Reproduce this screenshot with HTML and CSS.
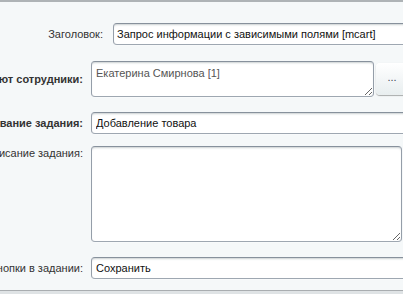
FILE: index.html
```html
<!DOCTYPE html>
<html>
<head>
  <meta charset="utf-8">
  <title>Задание</title>
  <link rel="stylesheet" href="styles.css">
</head>
<body>
  <div class="top-line"></div>
  <div class="form">
    <div class="row row-title">
      <label class="label label-wide">Заголовок:</label>
      <input class="field field-title" type="text" value="Запрос информации с зависимыми полями [mcart]">
    </div>
    <div class="row row-users">
      <label class="label required">Выполняют сотрудники:</label>
      <textarea class="area area-users">Екатерина Смирнова [1]</textarea>
      <button class="dots-btn">...</button>
    </div>
    <div class="row row-name">
      <label class="label required">Название задания:</label>
      <input class="field" type="text" value="Добавление товара">
    </div>
    <div class="row row-top">
      <label class="label">Описание задания:</label>
      <textarea class="area area-desc"></textarea>
    </div>
    <div class="row row-last">
      <label class="label">Текст кнопки в задании:</label>
      <input class="field" type="text" value="Сохранить">
    </div>
  </div>
  <div class="bottom-line"></div>
</body>
</html>
```

FILE: styles.css
```css
body {
    margin: 0;
    background: #f5f8f9;
    font-family: "Liberation Sans", Arial, sans-serif;
    font-size: 11px;
    color: #000;
    overflow: hidden;
    height: 294px;
    position: relative;
}

.top-line {
    height: 2px;
    background: #aeb3b6;
}

.form {
    padding-top: 21px;
}

.row {
    display: flex;
    align-items: center;
    margin-bottom: 15px;
}

.row-title {
    margin-bottom: 16px;
}

.row-name {
    margin-bottom: 12px;
}

.row-top {
    align-items: flex-start;
    margin-bottom: 15px;
}

.label {
    flex: none;
    width: 83px;
    margin-right: 8px;
    display: flex;
    justify-content: flex-end;
    white-space: nowrap;
    color: #333;
    line-height: 14px;
}

.label-wide {
    width: 103px;
    margin-right: 10px;
}

.required {
    font-weight: bold;
}

.field,
.area {
    flex: none;
    box-sizing: border-box;
    margin: 0;
    background: #fff;
    border: 1px solid;
    border-color: #87919c #959ea9 #9ea7b1 #959ea9;
    border-radius: 4px;
    box-shadow: 0 1px 0 0 rgba(255, 255, 255, 0.3), inset 0 2px 2px -1px rgba(180, 188, 191, 0.7);
    font-family: "Liberation Sans", Arial, sans-serif;
    font-size: 11px;
    color: #111;
    outline: none;
}

.field {
    height: 22px;
    width: 330px;
    padding: 0 4px;
}

.field-title {
    padding-left: 3px;
}

.area {
    padding: 4px 4px;
    line-height: 14px;
}

.area-users {
    width: 283px;
    height: 36px;
    color: #555;
}

.area-desc {
    width: 311px;
    height: 96px;
}

.dots-btn {
    flex: none;
    box-sizing: border-box;
    width: 32px;
    height: 32px;
    margin-left: 2px;
    padding: 0 0 4px;
    border: none;
    border-radius: 4px;
    background: linear-gradient(#fff, #e8eeef);
    box-shadow: 0 0 1px rgba(0, 0, 0, 0.11), 0 1px 1px rgba(0, 0, 0, 0.3), inset 0 1px #fff, inset 0 0 1px rgba(255, 255, 255, 0.5);
    color: #3f4b54;
    font-family: "Liberation Sans", Arial, sans-serif;
    font-size: 11px;
}

.bottom-line {
    position: absolute;
    left: 0;
    right: 0;
    bottom: 0;
    height: 3px;
    border-top: 1px solid #a9adb0;
    background: #dfe3e5;
}
```
